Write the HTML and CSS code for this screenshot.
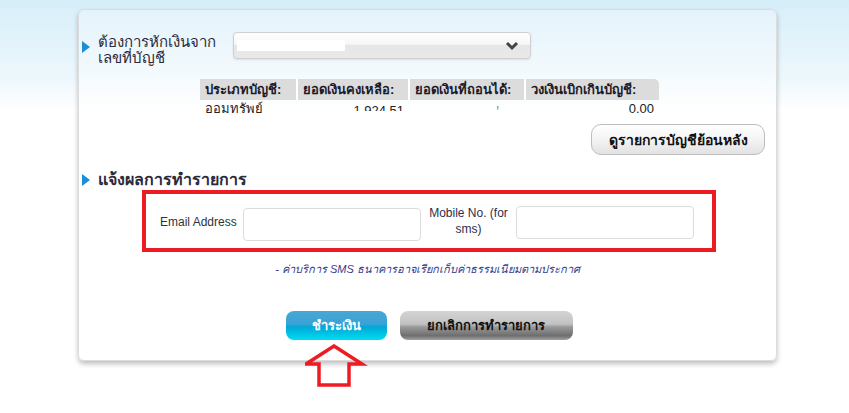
FILE: index.html
```html
<!DOCTYPE html>
<html>
<head>
    <title>ชำระเงิน</title>
    <link rel="stylesheet" href="styles.css">
</head>
<body>
    <div class="card">
        <div class="acct-row">
            <div class="title">ต้องการหักเงินจาก<br>เลขที่บัญชี</div>
            <div class="select">
                <span class="masked"></span>
                <svg class="chevron" width="14" height="10" viewBox="0 0 14 10">
                    <path d="M2 2 L7 7 L12 2" fill="none" stroke="#444" stroke-width="3"/>
                </svg>
            </div>
        </div>

        <table class="balance">
            <tr>
                <th class="col-type">ประเภทบัญชี:</th>
                <th class="col-bal">ยอดเงินคงเหลือ:</th>
                <th class="col-avail">ยอดเงินที่ถอนได้:</th>
                <th class="col-od">วงเงินเบิกเกินบัญชี:</th>
            </tr>
            <tr>
                <td>ออมทรัพย์</td>
                <td class="num"><span class="hidden-part">1,924.51</span></td>
                <td class="num"><span class="hidden-part faint">ꞌ ‐‐‐‐</span></td>
                <td class="num">0.00</td>
            </tr>
        </table>

        <div class="history-row">
            <button class="btn-history">ดูรายการบัญชีย้อนหลัง</button>
        </div>

        <div class="section-title">แจ้งผลการทำรายการ</div>

        <div class="notify-box">
            <label class="lbl-email" for="email">Email Address</label>
            <input type="text" id="email" class="field">
            <label class="lbl-mobile" for="mobile">Mobile No. (for<br>sms)</label>
            <input type="text" id="mobile" class="field field-mobile">
        </div>

        <p class="note">- ค่าบริการ SMS ธนาคารอาจเรียกเก็บค่าธรรมเนียมตามประกาศ</p>

        <div class="actions">
            <button class="btn-pay">ชำระเงิน</button>
            <button class="btn-cancel">ยกเลิกการทำรายการ</button>
        </div>
    </div>

    <!-- pointer drawn over the card edge -->
    <svg class="pointer" width="64" height="46" viewBox="0 0 64 46">
        <path d="M29 2 L57 20 L44 20 L44 41 L14 41 L14 20 L1 20 Z" fill="none" stroke="#ed1c24" stroke-width="3.5" stroke-linejoin="miter"/>
    </svg>
</body>
</html>
```

FILE: styles.css
```css
body {
    margin: 0;
    height: 413px;
    font-family: Tahoma, "Liberation Sans", "DejaVu Sans", sans-serif;
    color: #222;
    background: linear-gradient(to bottom, #d6eef9 0, #eef8fc 80px, #fff 110px);
    position: relative;
    overflow: hidden;
}

.card {
    position: absolute;
    top: 9px;
    left: 78px;
    width: 697px;
    height: 350px;
    border: 1px solid #dcdcdc;
    border-radius: 6px;
    background: linear-gradient(to bottom, #e4f3fb 0, #f2f9fd 60px, #fff 100px);
    box-shadow: 0 3px 5px rgba(0, 0, 0, 0.25);
}

.acct-row {
    display: flex;
    margin-top: 22px;
    height: 34px;
}

.title,
.section-title {
    position: relative;
    padding-left: 18px;
    font-size: 15px;
    line-height: 16px;
    color: #2a2a3a;
}

.title {
    width: 135px;
    padding-top: 2px;
    margin-left: 1px;
}

.title::before,
.section-title::before {
    content: "";
    position: absolute;
    left: 2px;
    top: 9px;
    border-left: 8px solid #1a8fd8;
    border-top: 6px solid transparent;
    border-bottom: 6px solid transparent;
}

.select {
    position: relative;
    width: 296px;
    height: 25px;
    border: 1px solid #cfcfcf;
    border-radius: 4px;
    background: linear-gradient(to bottom, #fff 0, #f6f6f6 45%, #e6e6e6 50%, #e9e9e9 100%);
    box-shadow: 0 1px 2px rgba(0, 0, 0, 0.1);
}

.masked {
    position: absolute;
    left: 3px;
    top: 7px;
    width: 108px;
    height: 11px;
    background: #fff;
}

.chevron {
    position: absolute;
    right: 11px;
    top: 8px;
}

.balance {
    margin: 13px 0 0 121px;
    border-collapse: collapse;
    font-size: 13px;
}

.balance th {
    height: 21px;
    padding: 0 5px;
    background: #dcdcdc;
    border-left: 2px solid #fff;
    font-weight: bold;
    text-align: left;
    white-space: nowrap;
    color: #1a1a2a;
}

.balance th.col-type {
    border-left: none;
    width: 86px;
}

.balance th.col-bal { width: 100px; }
.balance th.col-avail { width: 104px; }

.balance th.col-od {
    width: 123px;
    border-top-right-radius: 5px;
}

.balance td {
    height: 18px;
    padding: 0 5px;
    vertical-align: top;
    line-height: 17px;
}

.balance td.num {
    text-align: right;
}

/* masked figures: only the top of the digits shows */
.hidden-part {
    position: relative;
    display: inline-block;
    padding-top: 2px;
}

.hidden-part::after {
    content: "";
    position: absolute;
    left: -2px;
    right: -2px;
    top: 11px;
    height: 10px;
    background: #fff;
}

.faint {
    color: #888;
}

.history-row {
    display: flex;
    justify-content: flex-end;
    padding-right: 11px;
    margin-top: 5px;
}

.btn-history {
    width: 174px;
    height: 31px;
    font-family: inherit;
    font-size: 14px;
    font-weight: bold;
    color: #111;
    border: 1px solid #bdbdbd;
    border-radius: 10px;
    background: linear-gradient(to bottom, #fff 0, #f4f4f4 50%, #e2e2e2 100%);
}

.section-title {
    margin-top: 17px;
    margin-left: 1px;
    font-size: 16px;
    font-weight: bold;
}

.section-title::before {
    top: 2px;
}

.notify-box {
    display: flex;
    align-items: center;
    box-sizing: border-box;
    width: 574px;
    height: 62px;
    margin: 2px 0 0 63px;
    border: 4px solid #ed1c24;
    padding-left: 14px;
    font-family: Tahoma, "Liberation Sans", sans-serif;
    font-size: 12px;
    color: #333;
}

.lbl-email {
    width: 83px;
    padding-top: 2px;
}

.field {
    box-sizing: border-box;
    width: 178px;
    height: 33px;
    border: 1px solid #dcdcdc;
    border-radius: 4px;
    margin-top: 6px;
}

.lbl-mobile {
    width: 95px;
    text-align: center;
    line-height: 16px;
    color: #2e2e4e;
}

.field-mobile {
    margin-top: 2px;
}

.note {
    margin: 8px 0 0;
    text-align: center;
    font-size: 11px;
    font-style: italic;
    color: #343c8a;
}

.actions {
    display: flex;
    justify-content: center;
    gap: 13px;
    margin-top: 33px;
    padding-left: 3px;
}

.actions button {
    height: 29px;
    font-family: inherit;
    font-size: 13px;
    font-weight: bold;
    border: none;
    border-radius: 8px;
}

.btn-pay {
    width: 101px;
    color: #fff;
    background: linear-gradient(to bottom, #48a7d6 0, #3aa2d4 45%, #00a8d8 55%, #00dcf0 100%);
}

.btn-cancel {
    width: 173px;
    color: #111;
    background: linear-gradient(to bottom, #d4d4d4 0, #c2c2c2 45%, #9a9a9a 55%, #6e6e6e 85%, #a0a0a0 100%);
}

.pointer {
    position: absolute;
    left: 305px;
    top: 344px;
}
```
